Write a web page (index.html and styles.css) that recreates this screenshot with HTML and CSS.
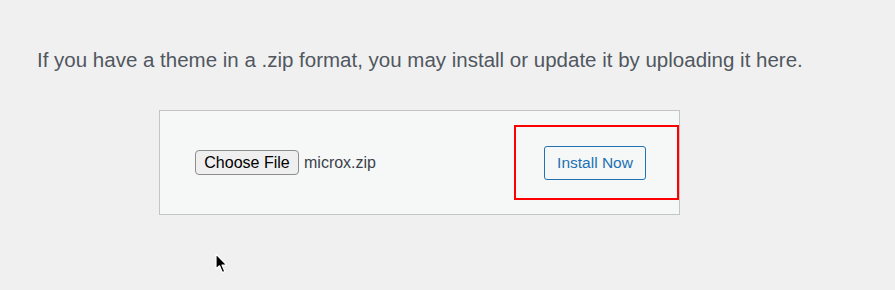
FILE: index.html
```html
<!DOCTYPE html>
<html lang="en">
<head>
  <meta charset="UTF-8">
  <meta name="viewport" content="width=device-width, initial-scale=1.0">
  <title>Upload Theme</title>
  <link rel="stylesheet" href="styles.css">
</head>
<body>
  <div class="upload_theme">
    <p class="install_help">If you have a theme in a .zip format, you may install or update it by uploading it here.</p>
    <form class="upload_form">
      <div class="file_pick">
        <button type="button" class="choose_btn">Choose File</button>
        <span class="file_name">microx.zip</span>
      </div>
      <div class="mark">
        <button type="button" class="install_btn">Install Now</button>
      </div>
    </form>
  </div>
  <!-- mouse pointer -->
  <svg class="pointer" width="14" height="22" viewBox="0 0 14 22">
    <path d="M1 1 L1 16 L4.5 12.8 L7.4 19.6 L9.8 18.6 L7 12 L11.8 12 Z" fill="#000" stroke="#fff" stroke-width="1.2" stroke-linejoin="round"/>
  </svg>
</body>
</html>
```

FILE: styles.css
```css
* {margin: 0;padding: 0;box-sizing: border-box;}
body {background-color: #f0f0f1;font-family: "Liberation Sans", Arial, sans-serif;color: #50575e;}
.upload_theme {padding: 47px 0 0 37px;}
.install_help {font-size: 20.5px;line-height: 26px;}
.upload_form {
  display: flex;
  align-items: center;
  justify-content: space-between;
  width: 521px;
  margin: 37px 0 0 122px;
  padding: 14px 0 14px 35px;
  background-color: #f6f7f7;
  border: 1px solid #c3c4c7;
}
.file_pick {display: flex;align-items: center;gap: 5px;}
.choose_btn {
  height: 25px;
  width: 104px;
  font-family: "Liberation Sans", Arial, sans-serif;
  font-size: 16px;
  color: #000;
  background-color: #efefef;
  border: 1px solid #8d8d8d;
  border-radius: 4px;
}
.file_name {font-size: 16px;color: #3c434a;}
.mark {
  display: flex;
  align-items: center;
  justify-content: center;
  width: 165px;
  height: 75px;
  padding-right: 3px;
  border: 2px solid #ff0000;
}
.install_btn {
  width: 102px;
  height: 34px;
  font-family: "Liberation Sans", Arial, sans-serif;
  font-size: 15.5px;
  color: #2271b1;
  background-color: #f6f7f7;
  border: 1px solid #2271b1;
  border-radius: 3px;
}
.pointer {position: absolute;left: 215px;top: 253px;}
```
